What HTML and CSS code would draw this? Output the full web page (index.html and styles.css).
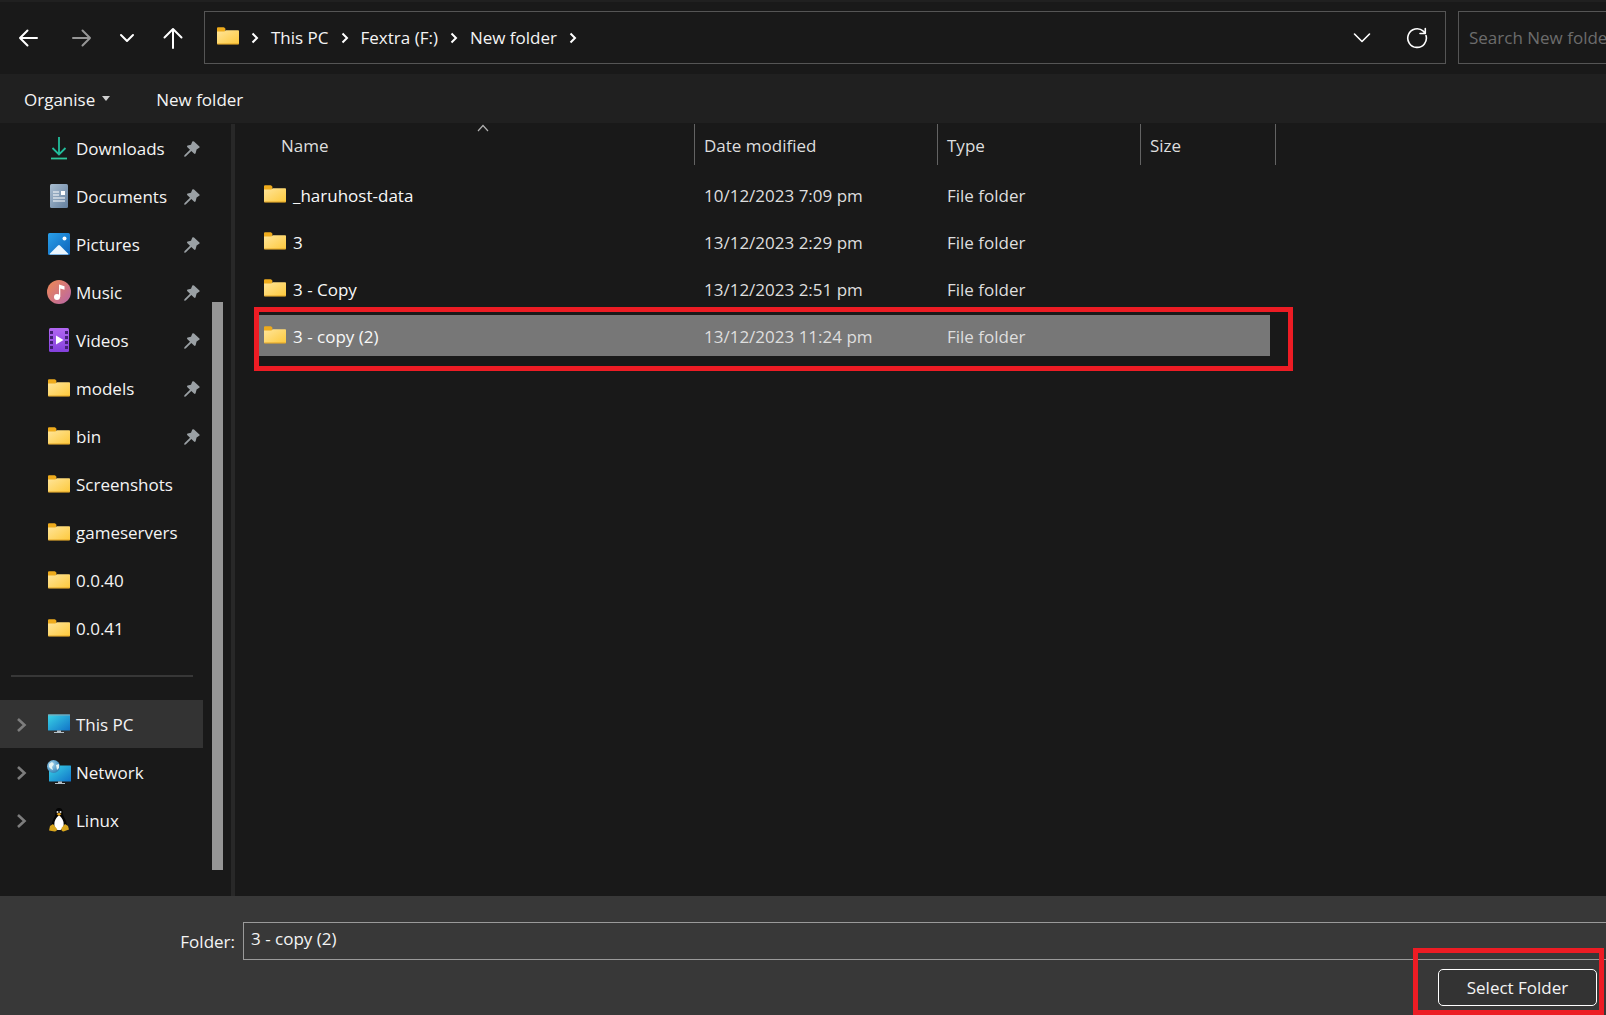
FILE: index.html
```html
<!DOCTYPE html>
<html lang="en">
<head>
<meta charset="utf-8">
<title>Select Folder</title>
<link rel="stylesheet" href="styles.css">
</head>
<body>
<svg class="defs" aria-hidden="true">
  <defs>
    <linearGradient id="g-folder" x1="0" y1="0" x2="1" y2="1"><stop offset="0" stop-color="#ffe59a"/><stop offset="1" stop-color="#fdc93c"/></linearGradient>
    <linearGradient id="g-doc" x1="0" y1="0" x2="1" y2="1"><stop offset="0" stop-color="#a9bdd0"/><stop offset="1" stop-color="#64809f"/></linearGradient>
    <linearGradient id="g-pic" x1="0" y1="0" x2="1" y2="1"><stop offset="0" stop-color="#2aa0ea"/><stop offset="1" stop-color="#0c62b8"/></linearGradient>
    <linearGradient id="g-music" x1="0" y1="0" x2="1" y2="1"><stop offset="0" stop-color="#f08a52"/><stop offset="1" stop-color="#b765a8"/></linearGradient>
    <linearGradient id="g-video" x1="0" y1="0" x2="0" y2="1"><stop offset="0" stop-color="#b267f2"/><stop offset="1" stop-color="#8340dc"/></linearGradient>
    <linearGradient id="g-pc" x1="0" y1="0" x2="1" y2="1"><stop offset="0" stop-color="#3ad4e6"/><stop offset="1" stop-color="#1173c8"/></linearGradient>
    <radialGradient id="g-globe" cx=".35" cy=".35" r=".7"><stop offset="0" stop-color="#a8d8f0"/><stop offset="1" stop-color="#2f7fb4"/></radialGradient>
  </defs>
  <symbol id="folder" viewBox="0 0 22 18">
    <path d="M0 1.200Q0 .3 1 .3H6.500Q7.300.3 8 1.200L9 2.500H8V5H0Z" fill="#eeab1c"/>
    <path d="M0 4.600H6.500Q7.400 4.600 8 3.900L8.600 3.200H21.200Q22 3.200 22 4V16.400Q22 17.200 21.200 17.200H.8Q0 17.200 0 16.400Z" fill="url(#g-folder)"/>
    <path d="M.3 17H21.700" stroke="#dc9d20" stroke-width=".9"/>
  </symbol>
  <symbol id="pin" viewBox="0 0 16 16">
    <path d="M8.300.6Q9.200-.2 10 .6L15.400 5.400Q16 6.200 15.200 6.800L12.600 8.500 11.600 12.300Q11 13.500 10 12.600L7.300 10 1.700 15.500.2 15.800.4 14.300 6 8.700 3.200 6Q2.600 4.900 3.800 4.500L7 3.700Z" fill="#9aa0a4"/>
  </symbol>
  <symbol id="downloads" viewBox="0 0 24 24">
    <path d="M12 1V18M5.500 12 12 18.500 18.500 12" fill="none" stroke="#22bd9b" stroke-width="1.800"/>
    <path d="M4 22.500H20" stroke="#2fc79a" stroke-width="1.800"/>
  </symbol>
  <symbol id="documents" viewBox="0 0 24 24">
    <rect x="3" width="18" height="24" rx="1.500" fill="url(#g-doc)"/>
    <path d="M6 8H12M6 11H12M6 14H18M6 17H18" stroke="#fff" stroke-width="1.200"/>
    <rect x="14" y="7" width="4" height="4" fill="#fff"/>
  </symbol>
  <symbol id="pictures" viewBox="0 0 24 24">
    <rect x="1" y="1" width="22" height="22" rx="1.500" fill="url(#g-pic)"/>
    <path d="M2.500 22 11 13.500Q12 12.600 13 13.500L21.500 22Q21 22.500 20 22.500H4Q3 22.500 2.500 22Z" fill="#eaf6ff"/>
    <circle cx="17.500" cy="6.500" r="2" fill="#fff"/>
  </symbol>
  <symbol id="music" viewBox="0 0 24 24">
    <circle cx="12" cy="12" r="12" fill="url(#g-music)"/>
    <circle cx="10" cy="17" r="3" fill="#fff"/>
    <path d="M12 17V4.500L17.500 6.200V9.800L13.300 8.600V17Z" fill="#fff"/>
  </symbol>
  <symbol id="videos" viewBox="0 0 24 24">
    <rect x="2" width="20" height="24" rx="1.500" fill="url(#g-video)"/>
    <path d="M4.500 3V22M19.500 3V22" stroke="#431f75" stroke-width="3" stroke-dasharray="3 2"/>
    <path d="M9 7.500V16.500L16.500 12Z" fill="#fff"/>
  </symbol>
  <symbol id="pc" viewBox="0 0 24 24">
    <rect x="1" y="2.500" width="22" height="16" rx=".6" fill="url(#g-pc)"/>
    <path d="M1 3H23" stroke="#8aa8b4"/>
    <path d="M10 18.500H14V20H17V21H7V20H10Z" fill="#b4c0c8"/>
  </symbol>
  <symbol id="network" viewBox="0 0 24 24">
    <rect x="2" y="5.500" width="22" height="16" rx=".6" fill="url(#g-pc)"/>
    <path d="M11 21.500H15V23H18V24H8V23H11Z" fill="#b4c0c8"/>
    <circle cx="6.500" cy="6.500" r="6.500" fill="url(#g-globe)"/>
    <path d="M2 4 5 2 7 4 5 7 6 10 4 9 2 7ZM9 5 12 4 12 8 10 10Z" fill="#e4f3f4"/>
  </symbol>
  <symbol id="linux" viewBox="0 0 24 24">
    <path d="M12 0Q16 0 15.700 5 16 8 18.500 12 21 17 18.500 21H5.500Q3.500 17 6 12 8.500 8 8.500 5 8.300 0 12 0Z" fill="#050505"/>
    <path d="M12 7.500Q15 9 16.500 14 17.500 20 13.500 22H10.500Q6.500 20 7.500 14 9 9 12 7.500Z" fill="#fff"/>
    <circle cx="10.500" cy="4" r="1" fill="#ddd"/><circle cx="13.500" cy="4" r="1" fill="#ddd"/>
    <path d="M9.500 6 12 4.800 14.500 6 12 8Z" fill="#e9a51b"/>
    <path d="M3 18 6 16 10 21Q10 23.500 7.500 23.500L2 22.500ZM21 18 18 16 14.500 20Q14 23.500 16.500 23.500L22 21.500Z" fill="#d8a51d"/>
  </symbol>
  <symbol id="crumb" viewBox="0 0 8 12"><path d="M1.500 1.500 6 6 1.500 10.500" fill="none" stroke="#fff" stroke-width="2"/></symbol>
  <symbol id="expand" viewBox="0 0 12 16"><path d="M2 2 8.500 8 2 14" fill="none" stroke="#7d7d7d" stroke-width="2.600"/></symbol>
</svg>

<header class="navbar">
  <button class="nav-btn back" aria-label="Back"><svg width="20" height="18" viewBox="0 0 20 18"><path d="M19 9H2M9.500 1.500 2 9 9.500 16.500" class="line"/></svg></button>
  <button class="nav-btn forward" aria-label="Forward"><svg width="20" height="18" viewBox="0 0 20 18"><path d="M1 9H18M10.500 1.500 18 9 10.500 16.500" class="line"/></svg></button>
  <button class="nav-btn recent" aria-label="Recent locations"><svg width="16" height="10" viewBox="0 0 16 10"><path d="M2 2 8 8 14 2" class="line"/></svg></button>
  <button class="nav-btn up" aria-label="Up"><svg width="20" height="22" viewBox="0 0 20 22"><path d="M10 21V2M1.500 10.500 10 2 18.500 10.500" class="line"/></svg></button>
  <nav class="address" aria-label="Address">
    <svg class="folder"><use href="#folder"/></svg>
    <svg class="crumb"><use href="#crumb"/></svg>
    <a href="#">This PC</a>
    <svg class="crumb"><use href="#crumb"/></svg>
    <a href="#">Fextra (F:)</a>
    <svg class="crumb"><use href="#crumb"/></svg>
    <a href="#">New folder</a>
    <svg class="crumb"><use href="#crumb"/></svg>
    <button class="addr-btn history" aria-label="Previous locations"><svg width="18" height="12" viewBox="0 0 18 12"><path d="M1.500 2 9 9.500 16.500 2" class="line thin"/></svg></button>
    <button class="addr-btn" aria-label="Refresh"><svg width="22" height="22" viewBox="0 0 22 22"><path d="M20 8.500A9.300 9.300 0 1 1 17.300 4.200L19 6M19.300 1.500V6.500H14" class="line thin"/></svg></button>
  </nav>
  <input class="search" type="text" placeholder="Search New folder" aria-label="Search New folder">
</header>

<div class="toolbar">
  <button class="tool">Organise <svg class="arrow" viewBox="0 0 10 6"><path d="M1 0H9L5 5Z" fill="#d0d0d0"/></svg></button>
  <button class="tool">New folder</button>
</div>

<main class="content">
  <aside class="sidebar">
    <ul class="places">
      <li><a href="#"><svg class="icon"><use href="#downloads"/></svg>Downloads<svg class="pin"><use href="#pin"/></svg></a></li>
      <li><a href="#"><svg class="icon"><use href="#documents"/></svg>Documents<svg class="pin"><use href="#pin"/></svg></a></li>
      <li><a href="#"><svg class="icon"><use href="#pictures"/></svg>Pictures<svg class="pin"><use href="#pin"/></svg></a></li>
      <li><a href="#"><svg class="icon"><use href="#music"/></svg>Music<svg class="pin"><use href="#pin"/></svg></a></li>
      <li><a href="#"><svg class="icon"><use href="#videos"/></svg>Videos<svg class="pin"><use href="#pin"/></svg></a></li>
      <li><a href="#"><svg class="icon small"><use href="#folder"/></svg>models<svg class="pin"><use href="#pin"/></svg></a></li>
      <li><a href="#"><svg class="icon small"><use href="#folder"/></svg>bin<svg class="pin"><use href="#pin"/></svg></a></li>
      <li><a href="#"><svg class="icon small"><use href="#folder"/></svg>Screenshots</a></li>
      <li><a href="#"><svg class="icon small"><use href="#folder"/></svg>gameservers</a></li>
      <li><a href="#"><svg class="icon small"><use href="#folder"/></svg>0.0.40</a></li>
      <li><a href="#"><svg class="icon small"><use href="#folder"/></svg>0.0.41</a></li>
      <li class="separator"></li>
      <li><a class="root current" href="#"><svg class="expand"><use href="#expand"/></svg><svg class="icon"><use href="#pc"/></svg>This PC</a></li>
      <li><a class="root" href="#"><svg class="expand"><use href="#expand"/></svg><svg class="icon"><use href="#network"/></svg>Network</a></li>
      <li><a class="root" href="#"><svg class="expand"><use href="#expand"/></svg><svg class="icon"><use href="#linux"/></svg>Linux</a></li>
    </ul>
    <div class="scrollbar"></div>
  </aside>

  <section class="files">
    <table>
      <colgroup><col class="c-name"><col class="c-date"><col class="c-type"><col class="c-size"></colgroup>
      <thead>
        <tr>
          <th><button class="sort first">Name<svg class="caret" viewBox="0 0 12 8"><path d="M1 7 6 1.500 11 7" fill="none" stroke="#b0b0b0" stroke-width="1.200"/></svg></button></th>
          <th><button class="sort">Date modified</button></th>
          <th><button class="sort">Type</button></th>
          <th><button class="sort last">Size</button></th>
        </tr>
      </thead>
      <tbody>
        <tr><td><div class="file"><svg class="folder"><use href="#folder"/></svg>_haruhost-data</div></td><td>10/12/2023 7:09 pm</td><td>File folder</td><td></td></tr>
        <tr><td><div class="file"><svg class="folder"><use href="#folder"/></svg>3</div></td><td>13/12/2023 2:29 pm</td><td>File folder</td><td></td></tr>
        <tr><td><div class="file"><svg class="folder"><use href="#folder"/></svg>3 - Copy</div></td><td>13/12/2023 2:51 pm</td><td>File folder</td><td></td></tr>
        <tr class="selected"><td><div class="file"><svg class="folder"><use href="#folder"/></svg>3 - copy (2)</div></td><td>13/12/2023 11:24 pm</td><td>File folder</td><td><span class="mark row-mark"></span></td></tr>
      </tbody>
    </table>
  </section>
</main>

<footer class="footer">
  <div class="field">
    <label for="folder-name">Folder:</label>
    <input id="folder-name" type="text" value="3 - copy (2)">
  </div>
  <div class="actions">
    <button class="select">Select Folder</button>
    <span class="mark button-mark"></span>
  </div>
</footer>
</body>
</html>
```
FILE: styles.css
```css
* {
  box-sizing: border-box;
}

body {
  margin: 0;
  min-height: 100vh;
  display: flex;
  flex-direction: column;
  overflow: hidden;
  background: #191919;
  color: #f4f4f4;
  font: 17px/24px "Open Sans", "Noto Sans", sans-serif;
}

button,
input {
  font: inherit;
  color: inherit;
  background: none;
  border: 0;
  border-radius: 0;
  margin: 0;
  padding: 0;
}

a {
  color: inherit;
  text-decoration: none;
}

.defs {
  position: absolute;
  width: 0;
  height: 0;
}

.line {
  fill: none;
  stroke: #fff;
  stroke-width: 2;
  stroke-linecap: round;
  stroke-linejoin: round;
}

.line.thin {
  stroke-width: 1.6;
}

.folder {
  width: 22px;
  height: 18px;
  flex: none;
  margin-bottom: 4px;
}

/* Address row */
.navbar {
  display: flex;
  align-items: center;
  height: 74px;
  padding-bottom: 1px;
  border-top: 2px solid #202020;
}

.nav-btn {
  display: flex;
  align-items: center;
  justify-content: center;
  flex: none;
  height: 52px;
}

.back {
  width: 56px;
}

.forward {
  width: 51px;
}

.forward .line {
  stroke: #969696;
}

.recent {
  width: 39px;
}

.up {
  width: 54px;
}

.address {
  display: flex;
  align-items: center;
  flex: 1;
  height: 53px;
  margin-left: 4px;
  padding: 0 17px 0 12px;
  border: 1px solid #555;
}

.address a {
  white-space: nowrap;
}

.crumb {
  width: 8px;
  height: 12px;
  flex: none;
  margin: 0 12px;
}

.addr-btn {
  display: flex;
}

.history {
  margin-left: auto;
  margin-right: 35px;
  align-items: center;
}

.search {
  flex: none;
  width: 148px;
  height: 53px;
  margin-left: 12px;
  padding-left: 10px;
  border: 1px solid #555;
  border-right: 0;
}

.search::placeholder {
  color: #6c6c6c;
  opacity: 1;
}

/* Command row */
.toolbar {
  display: flex;
  align-items: center;
  gap: 45px;
  height: 49px;
  padding: 2px 0 0 24px;
  background: #202020;
}

.tool {
  display: flex;
  align-items: center;
  gap: 6px;
}

.arrow {
  width: 10px;
  height: 6px;
  margin-bottom: 2px;
}

/* Places */
.content {
  display: flex;
  flex: 1;
  padding-top: 1px;
}

.sidebar {
  display: flex;
  flex: none;
  width: 235px;
  border-right: 4px solid #282828;
}

.places {
  list-style: none;
  margin: 0;
  padding: 0;
  width: 203px;
}

.places a {
  display: flex;
  align-items: center;
  height: 48px;
  padding: 2px 3px 0 47px;
}

.places .root {
  padding-left: 16px;
}

.places .current {
  background: #333;
}

.icon {
  width: 24px;
  height: 24px;
  flex: none;
  margin: 0 5px 2px 0;
}

.icon.small {
  width: 22px;
  height: 18px;
  margin: 0 6px 2px 1px;
}

.pin {
  width: 16px;
  height: 16px;
  margin-left: auto;
}

.expand {
  width: 12px;
  height: 16px;
  margin-right: 19px;
}

.separator {
  height: 48px;
  padding: 23px 10px 0 11px;
}

.separator::before {
  content: "";
  display: block;
  height: 2px;
  background: #373737;
}

.scrollbar {
  width: 11px;
  margin: 178px 0 26px 9px;
  background: #969696;
}

/* File list */
.files {
  flex: 1;
  padding-left: 24px;
}

table {
  width: 1011px;
  table-layout: fixed;
  border-spacing: 0 6px;
  margin-top: -6px;
}

.c-name {
  width: 436px;
}

.c-date {
  width: 243px;
}

.c-type {
  width: 203px;
}

.c-size {
  width: 129px;
}

th {
  height: 44px;
  padding: 0;
  font-weight: normal;
  vertical-align: top;
}

.sort {
  display: block;
  position: relative;
  width: 100%;
  height: 41px;
  padding: 2px 0 0 9px;
  border-right: 1px solid #636363;
  color: #dedede;
  text-align: left;
}

.sort.first {
  padding-left: 22px;
}

.sort.last {
  width: calc(100% + 6px);
}

.caret {
  position: absolute;
  top: 0;
  left: 50%;
  width: 12px;
  height: 8px;
}

td {
  height: 41px;
  padding: 3px 0 0 9px;
  color: #dedede;
}

td:first-child {
  padding-left: 5px;
  color: #f8f8f8;
}

.file {
  display: flex;
  align-items: center;
  gap: 7px;
}

.selected {
  position: relative;
}

.selected td {
  background: #777;
}

.mark {
  position: absolute;
  border: 5px solid #ed1c24;
  pointer-events: none;
}

.row-mark {
  inset: -8px -23px -15px -5px;
}

/* Folder name and confirm */
.footer {
  padding: 26px 0 9px;
  background: #383838;
}

.field {
  display: flex;
  align-items: center;
}

.field label {
  width: 243px;
  padding: 2px 8px 0 0;
  text-align: right;
}

.field input {
  flex: 1;
  height: 38px;
  padding: 0 7px 5px;
  border: 1px solid #9a9a9a;
  border-right: 0;
}

.actions {
  position: relative;
  width: 159px;
  margin: 9px 9px 0 auto;
}

.select {
  display: block;
  width: 100%;
  height: 37px;
  padding-top: 1px;
  border: 1px solid #fff;
  border-radius: 5px;
  background: #333;
}

.button-mark {
  inset: -21px -7px -9px -25px;
}
```
